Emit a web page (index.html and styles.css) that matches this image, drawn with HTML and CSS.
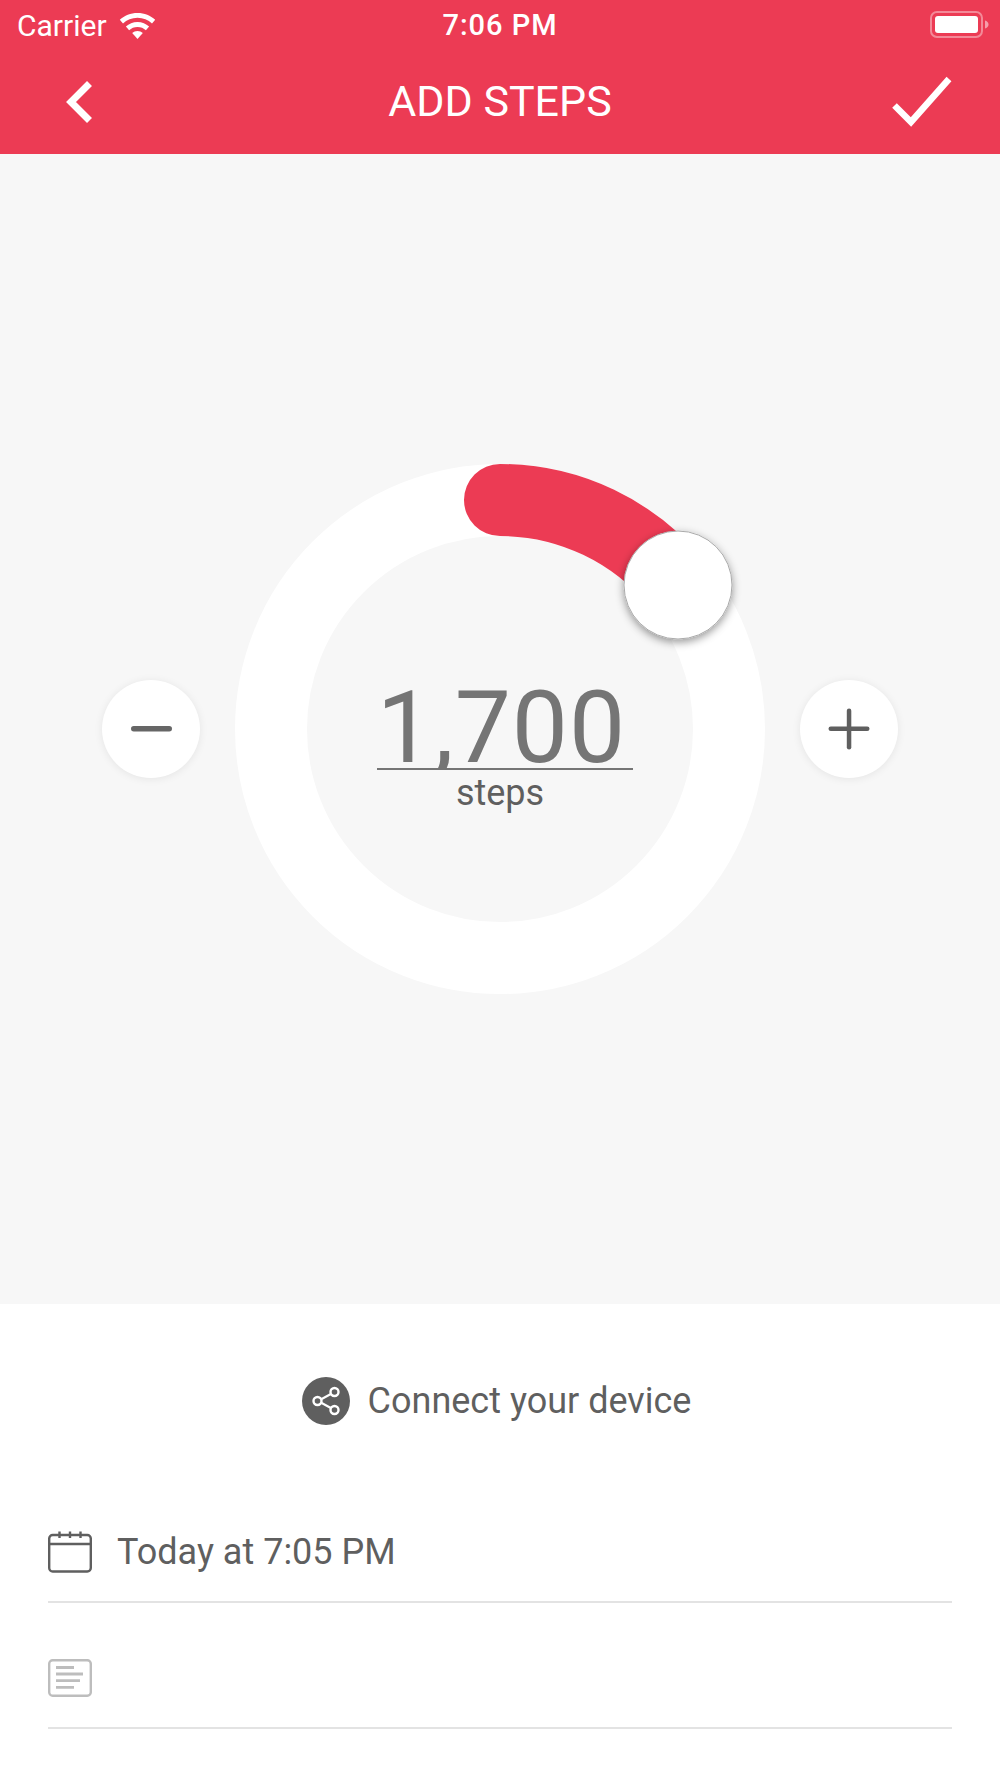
FILE: index.html
```html
<!DOCTYPE html>
<html lang="en">
<head>
    <meta charset="UTF-8">
    <title>Add Steps</title>
    <link rel="stylesheet" href="styles.css">
</head>
<body>
    <div class="header">
        <div class="status-bar">
            <div class="status-left">
                <span class="carrier">Carrier</span>
                <svg class="wifi" viewBox="0 0 37 27" width="37" height="27">
                    <path d="M18.5 1C11.5 1 5.5 3.5 0.8 7.8L4 11.4C7.8 7.9 12.9 5.8 18.5 5.8S29.2 7.9 33 11.4L36.2 7.8C31.5 3.5 25.5 1 18.5 1Z" fill="#fff"/>
                    <path d="M18.5 10C14 10 9.9 11.7 6.9 14.6L10.1 18.2C12.3 16.1 15.2 14.9 18.5 14.9S24.7 16.1 26.9 18.2L30.1 14.6C27.1 11.7 23 10 18.5 10Z" fill="#fff"/>
                    <path d="M18.5 19C16.5 19 14.6 19.8 13.2 21.1L18.5 27L23.8 21.1C22.4 19.8 20.5 19 18.5 19Z" fill="#fff"/>
                </svg>
            </div>
            <span class="clock">7:06 PM</span>
            <svg class="battery" viewBox="0 0 60 28" width="60" height="28">
                <rect x="1" y="1" width="51" height="25" rx="6" fill="none" stroke="#fff" stroke-opacity="0.4" stroke-width="2"/>
                <rect x="5" y="5" width="43" height="17" rx="3" fill="#fff"/>
                <path d="M55 9.5C57 10 58.5 11.5 58.5 13.5S57 17 55 17.5Z" fill="#fff" fill-opacity="0.5"/>
            </svg>
        </div>
        <div class="nav-bar">
            <svg class="nav-back" viewBox="0 0 30 44" width="30" height="44">
                <path d="M26.5 4.5L8 23L26.5 41.5" fill="none" stroke="#fff" stroke-width="7"/>
            </svg>
            <h1 class="nav-title">ADD STEPS</h1>
            <svg class="nav-done" viewBox="0 0 62 52" width="62" height="52">
                <path d="M4.5 30.5L21 47L59 4" fill="none" stroke="#fff" stroke-width="6.5"/>
            </svg>
        </div>
    </div>

    <div class="dial-panel">
        <div class="round-button">
            <svg class="minus-icon" viewBox="0 0 44 8" width="44" height="8">
                <rect x="1" y="1" width="41" height="5.5" rx="2.75" fill="#666"/>
            </svg>
        </div>

        <div class="dial">
            <svg class="dial-ring" viewBox="0 0 532 532" width="532" height="532">
                <defs>
                    <filter id="knobShadow" x="-30%" y="-30%" width="160%" height="160%">
                        <feDropShadow dx="0" dy="3" stdDeviation="4" flood-color="#000" flood-opacity="0.4"/>
                    </filter>
                </defs>
                <circle cx="266" cy="266" r="229" fill="none" stroke="#fff" stroke-width="72"/>
                <path d="M266 37A229 229 0 0 1 444 122" fill="none" stroke="#ec3b54" stroke-width="72" stroke-linecap="round"/>
                <circle cx="444" cy="122" r="54" fill="#fff" stroke="#aaa" stroke-width="1" filter="url(#knobShadow)"/>
            </svg>
            <div class="dial-label">
                <div class="dial-value">1,700</div>
                <div class="dial-unit">steps</div>
            </div>
        </div>

        <div class="round-button">
            <svg viewBox="0 0 44 44" width="44" height="44">
                <rect x="1.5" y="19.5" width="41" height="4.5" rx="2.25" fill="#5f5f5f"/>
                <rect x="19.8" y="1.5" width="4.5" height="41" rx="2.25" fill="#5f5f5f"/>
            </svg>
        </div>
    </div>

    <div class="details">
        <div class="connect">
            <svg viewBox="0 0 48 48" width="48" height="48">
                <circle cx="24" cy="24" r="24" fill="#5f5f5f"/>
                <path d="M32.5 15L16 24L32.5 33" fill="none" stroke="#fff" stroke-width="2.2"/>
                <circle cx="32.5" cy="15" r="4" fill="#5f5f5f" stroke="#fff" stroke-width="2.4"/>
                <circle cx="15.5" cy="24" r="4" fill="#5f5f5f" stroke="#fff" stroke-width="2.4"/>
                <circle cx="32.5" cy="33" r="4" fill="#5f5f5f" stroke="#fff" stroke-width="2.4"/>
            </svg>
            <span>Connect your device</span>
        </div>

        <div class="detail-row">
            <svg viewBox="0 0 44 42" width="44" height="42">
                <rect x="1.2" y="4" width="41.6" height="36.5" rx="3.5" fill="none" stroke="#5f5f5f" stroke-width="2.4"/>
                <path d="M1.5 13H42.5M11.5 0.5V7M22 0.5V7M32.5 0.5V7" fill="none" stroke="#5f5f5f" stroke-width="2.4"/>
            </svg>
            <span>Today at 7:05 PM</span>
        </div>

        <div class="detail-row">
            <svg viewBox="0 0 44 38" width="44" height="38">
                <rect x="1.2" y="1.2" width="41.6" height="35.6" rx="3.5" fill="none" stroke="#bdbdbd" stroke-width="2.4"/>
                <path d="M8 8.5H26M8 15H35M8 21.7H32M8 28.3H26" fill="none" stroke="#bdbdbd" stroke-width="2.8"/>
            </svg>
        </div>
    </div>
</body>
</html>
```

FILE: styles.css
```css
* {
    margin: 0;
    padding: 0;
    box-sizing: border-box;
}

body {
    font-family: 'Roboto', 'Liberation Sans', sans-serif;
    background-color: #ffffff;
    color: #5f5f5f;
    min-height: 100vh;
    display: flex;
    flex-direction: column;
}

svg {
    display: block;
    flex-shrink: 0;
}

.header {
    height: 154px;
    background-color: #ec3b54;
    color: #ffffff;
}

.status-bar {
    height: 50px;
    padding: 0 10px;
    display: grid;
    grid-template-columns: 1fr auto 1fr;
    align-items: center;
}

.status-left {
    margin-left: 7px;
    display: flex;
    align-items: center;
    gap: 12px;
}

.carrier {
    font-size: 30px;
}

.clock {
    font-size: 29px;
    font-weight: 500;
    letter-spacing: 1px;
}

.battery {
    justify-self: end;
}

.nav-bar {
    height: 104px;
    padding: 0 48px 2px;
    display: grid;
    grid-template-columns: 1fr auto 1fr;
    align-items: center;
}

.nav-back {
    margin-left: 15px;
}

.nav-title {
    font-size: 43px;
    font-weight: 400;
}

.nav-done {
    justify-self: end;
}

.dial-panel {
    height: 1150px;
    padding: 0 102px;
    background-color: #f7f7f7;
    display: flex;
    align-items: center;
    justify-content: space-between;
}

.round-button {
    width: 98px;
    height: 98px;
    border-radius: 50%;
    background-color: #ffffff;
    box-shadow: 0 1px 8px rgba(0, 0, 0, 0.08);
    display: flex;
    align-items: center;
    justify-content: center;
}

.minus-icon {
    margin-left: 2px;
}

.dial {
    width: 532px;
    height: 532px;
    position: relative;
}

.dial-label {
    position: absolute;
    inset: 0;
    display: flex;
    flex-direction: column;
    align-items: center;
    padding-top: 225px;
}

/* tight line box: the comma gets cut off at the underline */
.dial-value {
    font-size: 100px;
    font-weight: 400;
    letter-spacing: 1px;
    line-height: 80px;
    color: #757575;
    margin-left: 10px;
    padding-right: 7px;
    overflow: hidden;
    border-bottom: 2px solid #757575;
}

.dial-unit {
    font-size: 36px;
    line-height: 46px;
    color: #5f5f5f;
}

.details {
    flex: 1;
    padding: 73px 48px 0;
}

.connect {
    height: 48px;
    padding-right: 7px;
    display: flex;
    align-items: center;
    justify-content: center;
    gap: 18px;
    font-size: 36px;
    margin-bottom: 52px;
}

.detail-row {
    height: 126px;
    padding-top: 26px;
    display: flex;
    align-items: center;
    gap: 25px;
    font-size: 36px;
    border-bottom: 2px solid #e3e3e3;
}
```
